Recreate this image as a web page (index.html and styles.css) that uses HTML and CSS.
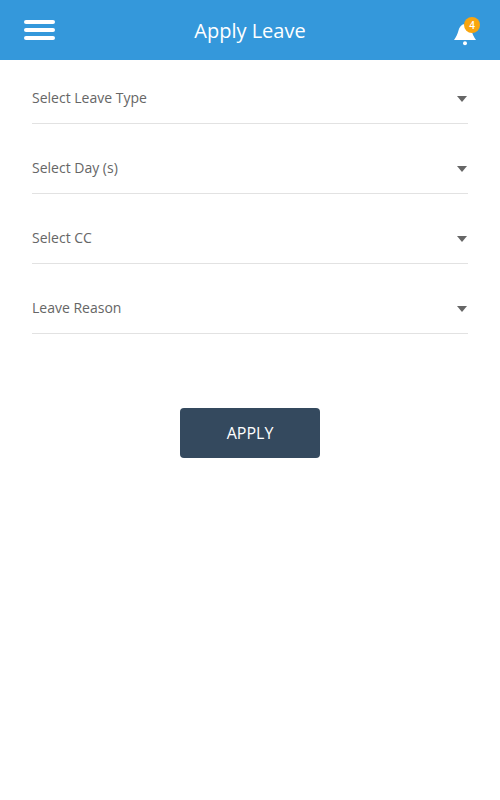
FILE: index.html
```html
<!DOCTYPE html>
<html lang="en">
<head>
    <meta charset="UTF-8">
    <meta name="viewport" content="width=device-width, initial-scale=1.0">
    <title>Apply Leave</title>
    <link rel="stylesheet" href="styles.css">
</head>
<body>
    <header class="header">
        <button type="button" class="menu-btn" aria-label="Menu">
            <span></span>
            <span></span>
            <span></span>
        </button>
        <h1>Apply Leave</h1>
        <button type="button" class="bell-btn" aria-label="Notifications">
            <svg width="22" height="22" viewBox="0 0 22 22" fill="#fff">
                <path d="M11 0C7.500 0 5.500 3 4.500 6.500 3.500 10 2.500 12.500 0 16h22c-2.500-3.500-3.500-6-4.500-9.500C16.500 3 14.500 0 11 0z"/>
                <circle cx="11" cy="19.200" r="2"/>
            </svg>
            <span class="badge">4</span>
        </button>
    </header>

    <form class="leave-form">
        <div class="field"><span>Select Leave Type</span><i class="arrow"></i></div>
        <div class="field"><span>Select Day (s)</span><i class="arrow"></i></div>
        <div class="field"><span>Select CC</span><i class="arrow"></i></div>
        <div class="field"><span>Leave Reason</span><i class="arrow"></i></div>
        <button type="submit" class="apply-btn">APPLY</button>
    </form>
</body>
</html>
```
FILE: styles.css
```css
* {
    box-sizing: border-box;
}
body {
    margin: 0;
    font-family: 'Open Sans', 'Noto Sans', sans-serif;
    background-color: #fff;
    color: #666;
}
button {
    border: none;
    padding: 0;
    background: none;
    font-family: inherit;
    cursor: pointer;
}
.header {
    display: flex;
    align-items: center;
    justify-content: space-between;
    height: 60px;
    padding: 0 24px;
    background-color: #3498db;
}
.header h1 {
    margin: 0;
    font-size: 20px;
    font-weight: normal;
    color: #fff;
}
.menu-btn {
    display: flex;
    flex-direction: column;
    gap: 4px;
    width: 31px;
}
.menu-btn span {
    height: 4px;
    border-radius: 2px;
    background-color: #fff;
}
.bell-btn {
    position: relative;
    display: flex;
    justify-content: flex-end;
    width: 31px;
    padding-top: 9px;
}
.badge {
    position: absolute;
    top: 2px;
    right: -4px;
    width: 16px;
    height: 16px;
    border-radius: 50%;
    background-color: #f9a50f;
    color: #fff;
    font-size: 10px;
    font-weight: 600;
    line-height: 16px;
}
.leave-form {
    padding: 14px 32px;
}
.field {
    display: flex;
    align-items: center;
    justify-content: space-between;
    height: 50px;
    margin-bottom: 20px;
    padding: 8px 0 10px;
    border-bottom: 1px solid #e2e2e2;
    font-size: 14px;
}
.arrow {
    margin-top: 2px;
    margin-right: 1px;
    border: 5px solid transparent;
    border-top: 6px solid #666;
    border-bottom: 0;
}
.apply-btn {
    display: block;
    width: 140px;
    height: 50px;
    margin: 74px auto 0;
    border-radius: 4px;
    background-color: #34495e;
    color: #fff;
    font-size: 16px;
}
```
